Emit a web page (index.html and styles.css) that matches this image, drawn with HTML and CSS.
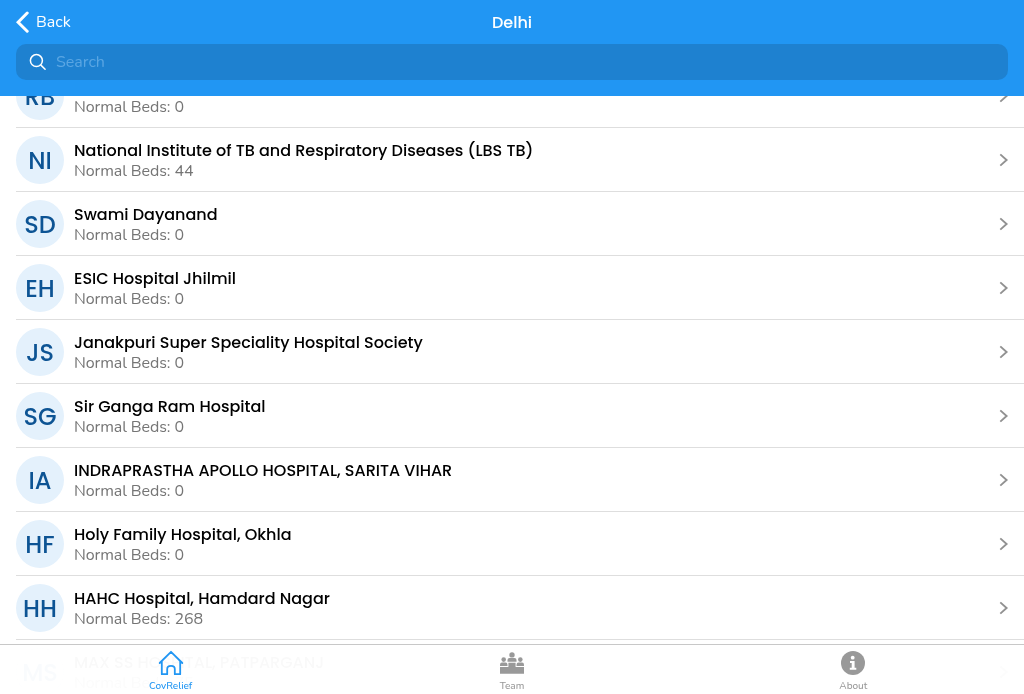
FILE: index.html
```html
<!DOCTYPE html>
<html lang="en">
<head>
<meta charset="utf-8">
<title>Delhi</title>
<link rel="stylesheet" href="styles.css">
</head>
<body>
<svg class="defs" width="0" height="0">
  <symbol id="chevron" viewBox="0 0 10 14"><path d="M1.3 1.4 7.6 7 1.3 12.6" fill="none" stroke="#919191" stroke-width="1.9"/></symbol>
</svg>
<div class="app">
  <header class="header">
    <div class="navbar">
      <a class="back"><svg width="13" height="22" viewBox="0 0 13 22"><path d="M11.2 2 2.1 11.2l9.1 9" fill="none" stroke="#fff" stroke-width="3" stroke-linecap="round" stroke-linejoin="miter"/></svg><span>Back</span></a>
      <h1>Delhi</h1>
    </div>
    <div class="search">
      <svg width="18" height="18" viewBox="0 0 18 18" fill="none" stroke="#fff" stroke-width="1.5" stroke-linecap="round"><circle cx="7.4" cy="7.6" r="6"/><path d="m11.9 12.1 4.2 4.2"/></svg>
      <span>Search</span>
    </div>
  </header>
  <main class="list">
    <article class="row"><div class="avatar">RB</div><div class="info"><h2>Rao Tula Ram</h2><p>Normal Beds: 0</p></div><svg class="chev"><use href="#chevron"/></svg></article>
    <article class="row"><div class="avatar">NI</div><div class="info"><h2>National Institute of TB and Respiratory Diseases (LBS TB)</h2><p>Normal Beds: 44</p></div><svg class="chev"><use href="#chevron"/></svg></article>
    <article class="row"><div class="avatar">SD</div><div class="info"><h2>Swami Dayanand</h2><p>Normal Beds: 0</p></div><svg class="chev"><use href="#chevron"/></svg></article>
    <article class="row"><div class="avatar">EH</div><div class="info"><h2>ESIC Hospital Jhilmil</h2><p>Normal Beds: 0</p></div><svg class="chev"><use href="#chevron"/></svg></article>
    <article class="row"><div class="avatar">JS</div><div class="info"><h2>Janakpuri Super Speciality Hospital Society</h2><p>Normal Beds: 0</p></div><svg class="chev"><use href="#chevron"/></svg></article>
    <article class="row"><div class="avatar">SG</div><div class="info"><h2>Sir Ganga Ram Hospital</h2><p>Normal Beds: 0</p></div><svg class="chev"><use href="#chevron"/></svg></article>
    <article class="row"><div class="avatar">IA</div><div class="info"><h2>INDRAPRASTHA APOLLO HOSPITAL, SARITA VIHAR</h2><p>Normal Beds: 0</p></div><svg class="chev"><use href="#chevron"/></svg></article>
    <article class="row"><div class="avatar">HF</div><div class="info"><h2>Holy Family Hospital, Okhla</h2><p>Normal Beds: 0</p></div><svg class="chev"><use href="#chevron"/></svg></article>
    <article class="row"><div class="avatar">HH</div><div class="info"><h2>HAHC Hospital, Hamdard Nagar</h2><p>Normal Beds: 268</p></div><svg class="chev"><use href="#chevron"/></svg></article>
    <article class="row"><div class="avatar">MS</div><div class="info"><h2>MAX SS HOSPITAL, PATPARGANJ</h2><p>Normal Beds: 75</p></div><svg class="chev"><use href="#chevron"/></svg></article>
  </main>
  <nav class="tabs">
    <a class="tab active"><svg width="26" height="26" viewBox="0 0 26 26" fill="none" stroke="currentColor" stroke-width="1.8" stroke-linejoin="round" stroke-linecap="round"><path d="M1.7 13 13 1.8 24.3 13M3.8 11.5v12.7h5.4v-5.2c0-2 1.6-3.2 3.8-3.2s3.8 1.2 3.8 3.2v5.2h5.4V11.5"/></svg><span>CovRelief</span></a>
    <a class="tab"><svg width="26" height="26" viewBox="0 0 26 26" fill="currentColor"><circle cx="13" cy="4.9" r="2.7"/><path d="M8.5 11.7V10q0-2 2-2h5q2 0 2 2v1.7z"/><circle cx="4.7" cy="9.6" r="2.3"/><circle cx="21.3" cy="9.6" r="2.3"/><path d="M1 16v-1.2q0-2.2 2-2.2h3.5q2 0 2 2.2V16zM17.5 16v-1.2q0-2.2 2-2.2H23q2 0 2 2.2V16zM9.4 12.7h7.2v4.4H25v6.7H1v-6.7h8.4z"/></svg><span>Team</span></a>
    <a class="tab"><svg width="26" height="26" viewBox="0 0 26 26"><circle cx="13" cy="13" r="12" fill="currentColor"/><circle cx="12.7" cy="7.7" r="1.9" fill="#fff"/><path d="M10 11h4.6v6.7h1.7v2H9.8v-2h1.9V13H10z" fill="#fff"/></svg><span>About</span></a>
  </nav>
</div>
</body>
</html>
```
FILE: styles.css
```css
* { box-sizing: border-box; }
body { margin: 0; background: #fff; font-family: Nunito, Lato, sans-serif; overflow: hidden; }
h1, h2, p { margin: 0; }
svg { display: block; flex: none; }
.defs { position: absolute; }
.app { display: flex; flex-direction: column; height: 694px; overflow: hidden; will-change: transform; }
.header { position: relative; z-index: 2; flex: none; height: 96px; background: #2196f3; color: #fff; }
.navbar { display: grid; grid-template-columns: 1fr auto 1fr; height: 44px; padding: 0 16px; align-items: center; }
.navbar h1 { padding-top: 2px; font: 500 16px/24px Poppins, Inter, sans-serif; }
.back { display: flex; align-items: center; gap: 7px; font-size: 16px; line-height: 22px; }
.search { display: flex; align-items: center; gap: 9px; height: 36px; margin: 0 16px; padding-left: 13px; border-radius: 10px; background: #1e81d0; color: #5aa6e3; font-size: 16px; }
.list { flex: 1; min-height: 0; margin-top: -32px; margin-bottom: -50px; overflow: hidden; }
.row { display: flex; align-items: center; height: 64px; margin-left: 16px; padding-right: 15px; border-bottom: 1px solid #dedede; }
.avatar { display: flex; align-items: center; justify-content: center; width: 48px; height: 48px; margin-right: 10px; padding-top: 2px; border-radius: 50%; background: #e4f1fc; color: #0d5494; font: 500 24px/36px Poppins, Inter, sans-serif; }
.info { flex: 1; padding-top: 2px; }
.info h2 { font: 500 16px/20px Poppins, Inter, sans-serif; color: #000; white-space: nowrap; }
.info p { font-size: 16px; line-height: 20px; color: #757575; letter-spacing: -.09px; }
.chev { width: 10px; height: 14px; }
.tabs { position: relative; z-index: 2; display: grid; grid-template-columns: repeat(3, 1fr); flex: none; height: 50px; border-top: 1px solid #c8c8c8; background: rgba(255, 255, 255, .975); }
.tab { display: flex; flex-direction: column; align-items: center; padding-top: 5px; color: #999; font-size: 10px; font-weight: 500; line-height: 12px; gap: 4px; }
.tab.active { color: #2196f3; }
```
